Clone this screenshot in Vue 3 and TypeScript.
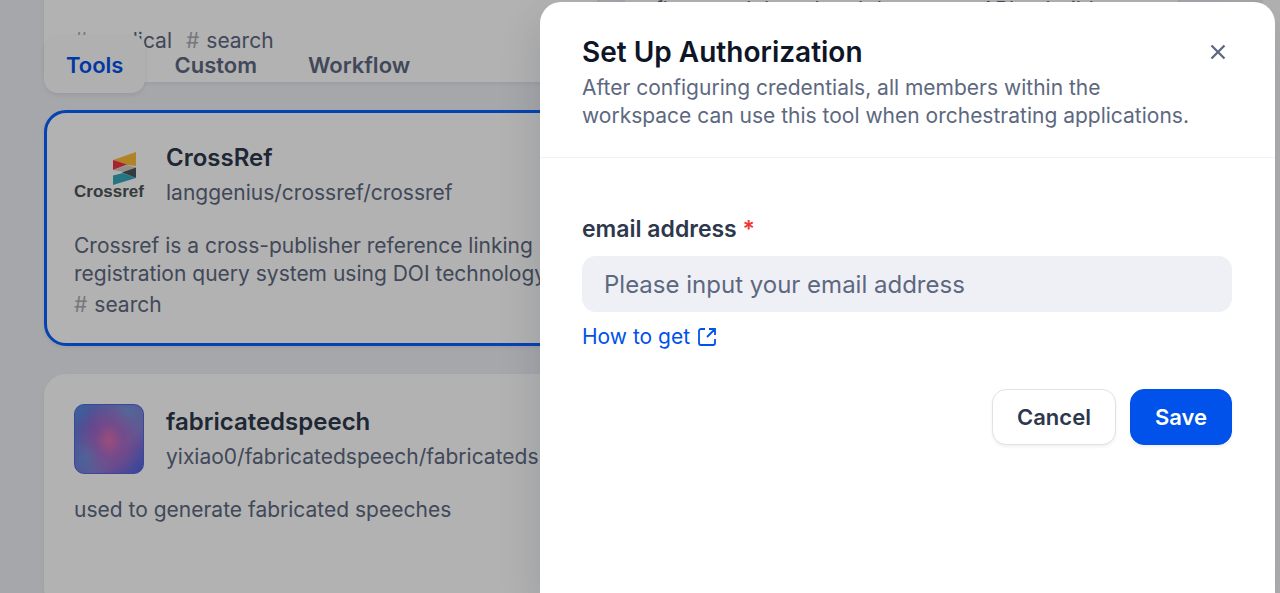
<script setup lang="ts">
import { ref } from 'vue'

interface Tool {
  name: string
  path: string
  description: string
  tags: string[]
  icon: 'crossref' | 'gradient' | 'plain'
  selected?: boolean
}

const tabs = ['Tools', 'Custom', 'Workflow']
const activeTab = ref('Tools')
const email = ref('')

const tools: Tool[] = [
  { name: '', path: '', description: '', tags: ['medical', 'search'], icon: 'plain' },
  { name: '', path: '', description: 'A tool for connecting to external services through flows and the related data, or an API to build', tags: [], icon: 'plain' },
  { name: 'CrossRef', path: 'langgenius/crossref/crossref', description: 'Crossref is a cross-publisher reference linking registration query system using DOI technology', tags: ['search'], icon: 'crossref', selected: true },
  { name: '', path: '', description: '', tags: [], icon: 'plain' },
  { name: 'fabricatedspeech', path: 'yixiao0/fabricatedspeech/fabricatedspeech', description: 'used to generate fabricated speeches', tags: [], icon: 'gradient' },
]
</script>

<template>
  <div class="app">
    <main class="main">
      <nav class="tabs">
        <button v-for="tab in tabs" :key="tab" type="button" class="tab" :class="{ active: tab === activeTab }" @click="activeTab = tab">{{ tab }}</button>
      </nav>
      <div class="grid">
        <article v-for="(tool, i) in tools" :key="i" class="card" :class="{ selected: tool.selected }">
          <div class="card-head">
            <svg v-if="tool.icon === 'crossref'" class="icon" viewBox="0 0 70 70" aria-label="Crossref">
              <path d="M39 20 62 12V26L50 24.500Z" fill="#fdbe37" />
              <path d="M39 20 53 24.500 39 30Z" fill="#ee3344" />
              <path d="M39 30 53 25 62 27.500 50 32Z" fill="#d5cdc4" />
              <path d="M62 27.500V38L48 32.500Z" fill="#4b5555" />
              <path d="M39 35.500 49 33 62 38 39 45Z" fill="#35a8bb" />
              <text x="0" y="57" class="crossref-word">Crossref</text>
            </svg>
            <div v-else class="icon" :class="tool.icon"></div>
            <div class="names">
              <h3 class="name">{{ tool.name }}</h3>
              <p class="path">{{ tool.path }}</p>
            </div>
          </div>
          <p class="description" :class="{ tall: tool.tags.length }">{{ tool.description }}</p>
          <ul v-if="tool.tags.length" class="tags">
            <li v-for="tag in tool.tags" :key="tag"><span class="hash">#</span>{{ tag }}</li>
          </ul>
        </article>
      </div>
    </main>
    <aside class="side"></aside>
    <div class="backdrop"></div>

    <form class="drawer" role="dialog" aria-labelledby="drawer-title" @submit.prevent>
      <header class="drawer-head">
        <div class="title-row">
          <h2 id="drawer-title" class="title">Set Up Authorization</h2>
          <button type="button" class="close" aria-label="Close">
            <svg viewBox="0 0 28 28"><path d="M7.500 7.500 20.500 20.500M20.500 7.500 7.500 20.500" fill="none" stroke="currentColor" stroke-width="2.300" /></svg>
          </button>
        </div>
        <p class="intro">After configuring credentials, all members within the workspace can use this tool when orchestrating applications.</p>
      </header>
      <div class="drawer-body">
        <label class="label" for="email">email address <span class="required">*</span></label>
        <input id="email" v-model="email" class="input" type="text" placeholder="Please input your email address" />
        <a class="help" href="#">How to get
          <svg viewBox="0 0 20 20"><path d="M8 2H4A2 2 0 0 0 2 4V16A2 2 0 0 0 4 18H16A2 2 0 0 0 18 16V12M12 2H18V8M18 2 10 10" fill="none" stroke="currentColor" stroke-width="1.800" /></svg>
        </a>
        <div class="actions">
          <button type="button" class="button">Cancel</button>
          <button type="submit" class="button primary">Save</button>
        </div>
      </div>
    </form>
  </div>
</template>

<style>
body { margin: 0; }
</style>

<style scoped>
.app {
  position: relative;
  display: flex;
  height: 100vh;
  overflow: hidden;
  background: #eeeff5;
  color: #5d6880;
  font-family: Inter, "Liberation Sans", sans-serif;
  font-size: 21px;
  line-height: 28px;
}
.app * { box-sizing: border-box; }
h2, h3, p, ul { margin: 0; padding: 0; }
button, input { font-family: inherit; }
.main { position: relative; flex: 1; min-width: 0; padding: 0 85px 0 44px; }
.side { flex: none; width: 17px; background: #fff; }
.tabs { position: absolute; z-index: 1; top: 35px; left: 44px; display: flex; gap: 7px; }
.tab {
  height: 58px;
  padding: 2px 22px 0;
  border: 0;
  border-radius: 14px;
  background: none;
  color: #5d6880;
  font-size: 22px;
  font-weight: 600;
  line-height: 28px;
}
.tab.active { background: #fdfdfe; color: #0052ea; box-shadow: 0 2px 4px rgba(16, 24, 40, .08); }
.grid {
  display: grid;
  grid-template-columns: repeat(2, minmax(0, 1fr));
  grid-auto-rows: 236px;
  gap: 28px;
  margin-top: -154px;
}
.card {
  padding: 27px;
  border: 3px solid #fff;
  border-radius: 22px;
  background: #fff;
  box-shadow: 0 2px 4px rgba(16, 24, 40, .06);
}
.card.selected { border-color: #0a60ff; }
.card-head { display: flex; gap: 22px; margin-bottom: 22px; }
.icon { flex: none; width: 70px; height: 70px; border-radius: 10px; overflow: visible; }
.plain { background: #eef0f4; }
.gradient {
  border: 1px solid #5268df;
  background:
    radial-gradient(ellipse 48% 60% at 50% 52%, #e070b0 0%, rgba(179, 102, 195, .7) 42%, transparent 100%),
    radial-gradient(circle at 20% 75%, #609ce0 0%, transparent 38%),
    radial-gradient(circle at 75% 10%, #769ada 0%, transparent 45%),
    linear-gradient(135deg, #5092de 0%, #805dd2 38%, #9772d0 65%, #4c63dc 100%);
}
.crossref-word { fill: #4b5555; font-family: "Liberation Sans", sans-serif; font-size: 17px; font-weight: 700; }
.names { min-width: 0; }
.name { color: #2d384c; font-size: 24px; font-weight: 600; line-height: 35px; white-space: nowrap; }
.path { line-height: 35px; white-space: nowrap; overflow: hidden; text-overflow: ellipsis; }
.tall { min-height: 56px; }
.tags { display: flex; gap: 14px; margin-top: 3px; list-style: none; }
.hash { margin-right: 7px; color: #a8abb3; }
.backdrop { position: absolute; z-index: 2; inset: 0; background: rgba(0, 0, 0, .3); }
.drawer {
  position: absolute;
  z-index: 3;
  top: 2px;
  right: 5px;
  bottom: 0;
  width: 735px;
  max-width: calc(100% - 10px);
  border-radius: 21px 21px 0 0;
  background: #fff;
  box-shadow: 0 16px 42px rgba(16, 24, 40, .14);
}
.drawer-head { padding: 32px 43px 27px 42px; border-bottom: 1px solid #f1f2f4; }
.title-row { display: flex; align-items: center; justify-content: space-between; margin-bottom: 4px; }
.title { color: #0d1526; font-size: 28px; font-weight: 600; line-height: 36px; }
.intro { padding-right: 35px; }
.close { width: 28px; height: 28px; padding: 0; border: 0; background: none; color: #5d6880; }
.close svg { display: block; }
.drawer-body { padding: 57px 43px 0 42px; }
.label { display: block; margin-bottom: 13px; color: #2d384c; font-size: 23px; font-weight: 600; line-height: 28px; }
.required { color: #f03535; }
.input {
  display: block;
  width: 100%;
  height: 56px;
  margin-bottom: 11px;
  padding: 0 22px;
  border: 0;
  border-radius: 14px;
  background: #eff0f5;
  color: #2d384c;
  font-size: 24px;
}
.input::placeholder { color: #5d6880; opacity: 1; }
.help { display: flex; align-items: center; gap: 7px; width: fit-content; color: #0052ea; text-decoration: none; }
.help svg { width: 20px; height: 20px; }
.actions { display: flex; justify-content: flex-end; gap: 14px; margin-top: 38px; }
.button {
  height: 56px;
  padding: 0 24px;
  border: 1px solid #e0e2e6;
  border-radius: 14px;
  background: #fff;
  color: #2d384c;
  font-size: 22px;
  font-weight: 600;
  line-height: 28px;
  box-shadow: 0 2px 3px rgba(16, 24, 40, .06);
}
.button.primary { border-color: #0052ea; background: #0052ea; color: #fff; }
</style>
